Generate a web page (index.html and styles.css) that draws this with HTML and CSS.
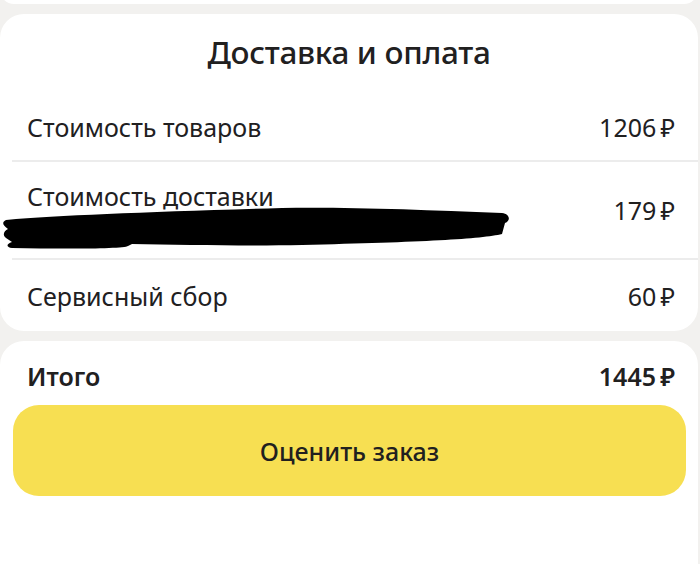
FILE: index.html
```html
<!DOCTYPE html>
<html lang="ru">
<head>
<meta charset="utf-8">
<link rel="stylesheet" href="styles.css">
</head>
<body>
<div class="page">
  <div class="card card-top"></div>
  <div class="card card-main">
    <h1 class="title">Доставка и оплата</h1>
    <div class="row row-first">
      <span class="label">Стоимость товаров</span>
      <span class="price">1206&#8239;₽</span>
    </div>
    <div class="row row-delivery">
      <div class="label-wrap">
        <span class="label">Стоимость доставки</span>
        <svg class="scribble" width="510" height="46" viewBox="0 0 510 46">
          <path d="M4 16 C60 11 150 8 280 4 C350 3 420 6 500 9 C508 10 509 17 503 19 L500 30 C480 35 420 38 300 41 C250 42 180 41 130 40 L126 42 C122 45 60 45 10 44 C4 43 4 40 10 38 L4 34 C0 31 2 27 6 25 C0 21 0 18 4 16 Z" fill="#000"/>
        </svg>
      </div>
      <span class="price">179&#8239;₽</span>
    </div>
    <div class="row row-last">
      <span class="label">Сервисный сбор</span>
      <span class="price">60&#8239;₽</span>
    </div>
  </div>
  <div class="card card-bottom">
    <div class="total">
      <span class="total-label">Итого</span>
      <span class="total-price">1445&#8239;₽</span>
    </div>
    <button class="rate-btn">Оценить заказ</button>
  </div>
</div>
</body>
</html>
```
FILE: styles.css
```css
* { box-sizing: border-box; }
html, body {
  margin: 0;
  padding: 0;
  background: #f2f1ef;
  font-family: "Noto Sans", "Open Sans", sans-serif;
  color: #21201f;
}
.page {
  width: 700px;
  height: 564px;
  overflow: hidden;
  display: flex;
  flex-direction: column;
  gap: 10px;
}
.card {
  background: #fff;
  border-radius: 24px;
  margin-right: 2px;
}
.card-top {
  flex: none;
  height: 28px;
  margin-top: -24px;
}
.card-main {
  flex: none;
  height: 317px;
  padding-top: 18px;
}
.title {
  margin: 0;
  text-align: center;
  font-size: 31.5px;
  font-weight: 500;
  line-height: 40px;
  letter-spacing: -0.3px;
  color: #21201f;
}
.row {
  display: flex;
  justify-content: space-between;
  align-items: center;
  margin-left: 12px;
  padding: 0 23px 0 15px;
  border-bottom: 2px solid #ececec;
  font-size: 25px;
  line-height: 34px;
}
.row-first { height: 90px; padding-top: 22px; }
.row-delivery { height: 98px; align-items: flex-start; padding-top: 17px; }
.row-delivery .price { margin-top: 14px; }
.row-last { height: 69px; border-bottom: none; padding-top: 3px; }
.label { color: #21201f; }
.label-wrap { position: relative; }
.scribble {
  position: absolute;
  left: -25px;
  top: 25px;
}
.price { color: #21201f; }
.card-bottom {
  flex: 1;
  border-radius: 24px 24px 0 0;
  padding: 18px 0 0 0;
}
.total {
  display: flex;
  justify-content: space-between;
  align-items: center;
  padding: 0 23px 0 27px;
  height: 34px;
  font-size: 25px;
  font-weight: 600;
}
.rate-btn {
  display: block;
  margin: 12px 0 0 13px;
  width: 673px;
  height: 91px;
  border: none;
  border-radius: 26px;
  background: #f7df52;
  font-family: inherit;
  font-size: 25px;
  font-weight: 500;
  color: #21201f;
}
```
